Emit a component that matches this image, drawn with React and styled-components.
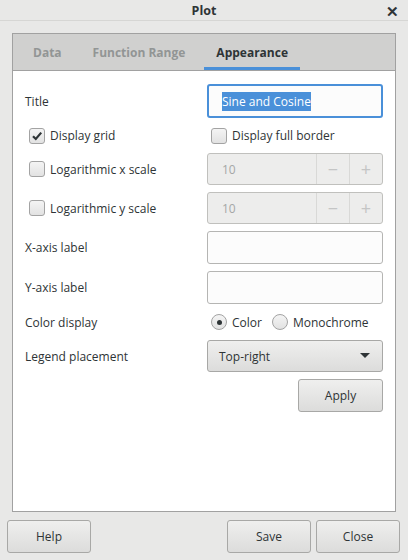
import React from 'react'
import styled, { createGlobalStyle } from 'styled-components'

const GlobalStyle = createGlobalStyle`
  html, body {
    margin: 0;
    padding: 0;
    background: #e8e8e7;
  }
  body {
    font-family: "Open Sans", "Noto Sans", sans-serif;
    font-size: 12px;
    color: #2e3436;
  }
`

const Window = styled.div`
  width: 408px;
  height: 560px;
  display: flex;
  flex-direction: column;
  background: #e8e8e7;
  overflow: hidden;
`
const TitleBar = styled.div`
  height: 20px;
  flex: none;
  display: flex;
  align-items: center;
  justify-content: center;
  position: relative;
  border-bottom: 1px solid #d6d6d4;
  font-weight: bold;
  font-size: 12.5px;
`
const CloseX = styled.span`
  position: absolute;
  right: 9px;
  top: 1px;
  font-size: 15px;
  font-weight: bold;
  color: #2e3436;
`
const Body = styled.div`
  flex: 1;
  display: flex;
  flex-direction: column;
  padding: 12px 12px 0 12px;
`
const Notebook = styled.div`
  flex: 1;
  display: flex;
  flex-direction: column;
  border: 1px solid #a1a1a1;
  background: #fff;
`
const TabBar = styled.div`
  height: 36px;
  display: flex;
  align-items: stretch;
  background: #d0d0cf;
  border-bottom: 1px solid #a1a1a1;
  padding-left: 8px;
`
const Tab = styled.div`
  display: flex;
  align-items: center;
  padding: 3px 12px 0 12px;
  margin-right: 7px;
  font-weight: bold;
  font-size: 12px;
  color: ${props => props.active ? '#2e3436' : '#929595'};
  border-bottom: 3px solid ${props => props.active ? '#4a90d9' : 'transparent'};
`
const Form = styled.div`
  display: grid;
  grid-template-columns: 1fr 176px;
  column-gap: 10px;
  row-gap: 7px;
  padding: 13px 12px 0 12px;
`
const Label = styled.div`
  display: flex;
  align-items: center;
  height: ${props => props.h || 33}px;
`
const CheckRow = styled.label`
  display: flex;
  align-items: center;
  gap: 5px;
  height: ${props => props.h || 21}px;
  padding-left: 4px;
`
const Box = styled.span`
  width: 14px;
  height: 14px;
  border: 1px solid #a3a3a3;
  border-radius: 3px;
  background: linear-gradient(#f4f4f4, #e2e2e2);
  display: flex;
  align-items: center;
  justify-content: center;
`
const Radio = styled(Box)`
  border-radius: 50%;
`
const Dot = styled.span`
  width: 5px;
  height: 5px;
  border-radius: 50%;
  background: #2e3436;
`
const Entry = styled.div`
  height: ${props => props.h || 33}px;
  box-sizing: border-box;
  border: ${props => props.focused ? '2px solid #4a90d9' : '1px solid #b5b5b3'};
  border-radius: 3px;
  background: #fcfcfc;
  display: flex;
  align-items: center;
  padding-left: ${props => props.focused ? 13 : 14}px;
`
const Selected = styled.span`
  background: #4a90d9;
  color: #fff;
  padding: 1px 0;
`
const Spin = styled.div`
  height: 32px;
  box-sizing: border-box;
  border: 1px solid #c0c0bd;
  border-radius: 3px;
  background: #ededec;
  display: flex;
  color: #a5a7a7;
`
const SpinValue = styled.div`
  flex: 1;
  display: flex;
  align-items: center;
  padding-left: 14px;
`
const SpinBtn = styled.div`
  width: 32px;
  border-left: 1px solid #d9d9d7;
  display: flex;
  align-items: center;
  justify-content: center;
  font-size: 18px;
  color: #c4c5c5;
`
const RadioRow = styled.div`
  display: flex;
  align-items: center;
  height: 22px;
  padding-left: 4px;
`
const RadioItem = styled.span`
  display: flex;
  align-items: center;
  gap: 5px;
  margin-right: 10px;
`
const Button = styled.div`
  height: ${props => props.h || 33}px;
  box-sizing: border-box;
  border: 1px solid #a8a8a6;
  border-radius: 3px;
  background: linear-gradient(#efefee, #dcdcdb);
  display: flex;
  align-items: center;
  justify-content: ${props => props.left ? 'space-between' : 'center'};
  padding: ${props => props.left ? '0 12px 0 11px' : '0'};
  width: ${props => props.w ? props.w + 'px' : 'auto'};
`
const ApplyCell = styled.div`
  display: flex;
  justify-content: flex-end;
`
const Footer = styled.div`
  height: 48px;
  flex: none;
  display: flex;
  align-items: center;
  padding: 0 8px 0 7px;
  gap: 5px;
`
const Spacer = styled.div`
  flex: 1;
`

const Check = ({ checked }) => (
  <Box>
    {checked && (
      <svg width="12" height="12" viewBox="0 0 12 12">
        <path d="M2 6.2 L4.8 9 L10.2 2.6" fill="none" stroke="#2e3436" strokeWidth="2.2" />
      </svg>
    )}
  </Box>
)

const SpinBox = ({ value }) => (
  <Spin>
    <SpinValue>{value}</SpinValue>
    <SpinBtn>−</SpinBtn>
    <SpinBtn>+</SpinBtn>
  </Spin>
)

export default function App() {
  return (
    <Window>
      <GlobalStyle />
      <TitleBar>
        Plot
        <CloseX>✕</CloseX>
      </TitleBar>
      <Body>
        <Notebook>
          <TabBar>
            <Tab>Data</Tab>
            <Tab>Function Range</Tab>
            <Tab active>Appearance</Tab>
          </TabBar>
          <Form>
            <Label h={34}>Title</Label>
            <Entry h={34} focused><Selected>Sine and Cosine</Selected></Entry>

            <CheckRow>
              <Check checked />Display grid
            </CheckRow>
            <CheckRow>
              <Check />Display full border
            </CheckRow>

            <CheckRow h={32}>
              <Check />Logarithmic x scale
            </CheckRow>
            <SpinBox value="10" />

            <CheckRow h={32}>
              <Check />Logarithmic y scale
            </CheckRow>
            <SpinBox value="10" />

            <Label>X-axis label</Label>
            <Entry />

            <Label>Y-axis label</Label>
            <Entry />

            <Label h={22}>Color display</Label>
            <RadioRow>
              <RadioItem><Radio><Dot /></Radio>Color</RadioItem>
              <RadioItem><Radio />Monochrome</RadioItem>
            </RadioRow>

            <Label h={32}>Legend placement</Label>
            <Button h={32} left>
              Top-right
              <svg width="10" height="6" viewBox="0 0 10 6">
                <path d="M0 0 L10 0 L5 5 Z" fill="#2e3436" />
              </svg>
            </Button>

            <div />
            <ApplyCell>
              <Button w={85}>Apply</Button>
            </ApplyCell>
          </Form>
        </Notebook>
      </Body>
      <Footer>
        <Button w={84}>Help</Button>
        <Spacer />
        <Button w={84}>Save</Button>
        <Button w={84}>Close</Button>
      </Footer>
    </Window>
  )
}
